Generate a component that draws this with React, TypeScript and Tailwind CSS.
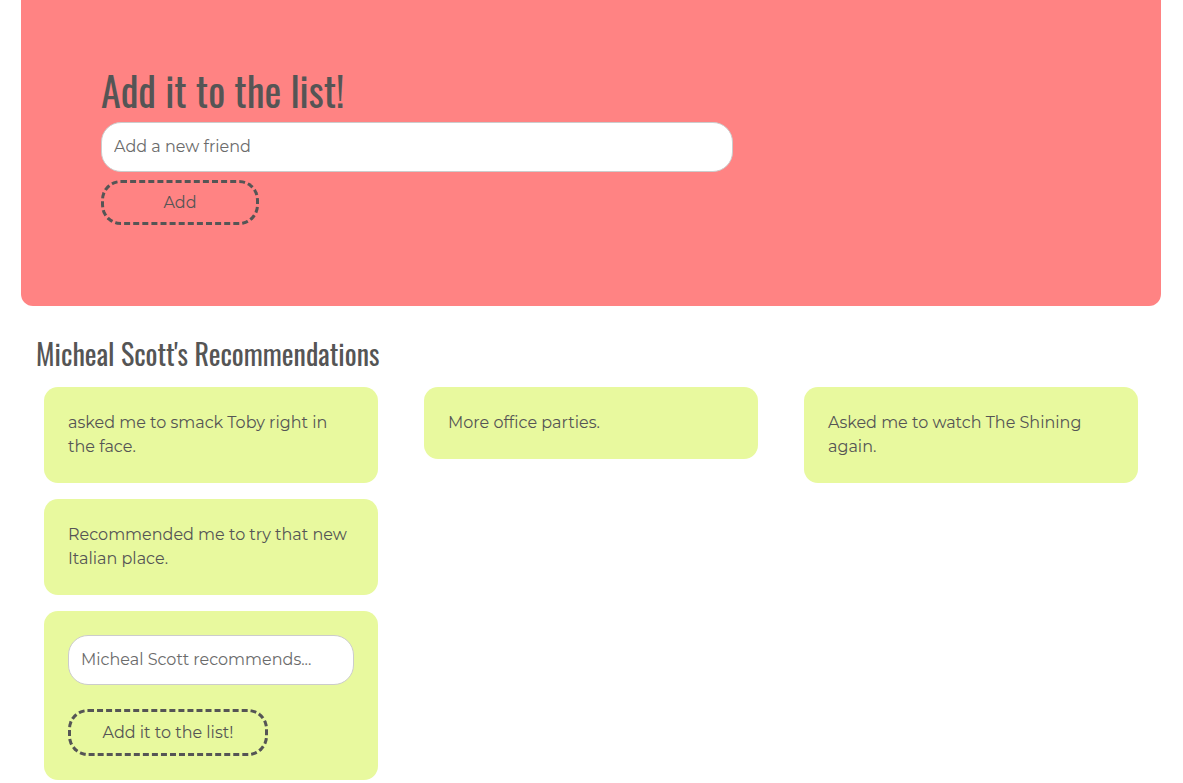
import React from "react";

const recs = [
  "asked me to smack Toby right in the face.",
  "More office parties.",
  "Asked me to watch The Shining again.",
  "Recommended me to try that new Italian place.",
];

export default function App() {
  return (
    <div className="min-h-[783px] bg-white font-[Montserrat,'DejaVu_Sans',sans-serif] text-[#555555]">
      <div className="mx-[21px] w-[1140px] rounded-b-[12px] bg-[#ff8383] px-[80px] pt-[64px] pb-[81px]">
        <h1 className="font-[Oswald,'Liberation_Sans_Narrow',sans-serif] text-[40px] leading-[52px] font-normal text-[#555555]">
          Add it to the list!
        </h1>
        <input
          className="mt-[6px] block h-[50px] w-[632px] rounded-[20px] border border-[#cccccc] bg-white px-[12px] pb-[2px] font-[Montserrat,'DejaVu_Sans',sans-serif] text-[16px] text-[#555555] outline-none placeholder:text-[#6b6b6b]"
          placeholder="Add a new friend"
        />
        <button className="mt-[8px] block h-[45px] w-[158px] rounded-[20px] border-[3px] border-dashed border-[#555555] bg-transparent font-[Montserrat,'DejaVu_Sans',sans-serif] text-[16px] text-[#555555]">
          Add
        </button>
      </div>

      <h2 className="ml-[36px] mt-[30px] font-[Oswald,'Liberation_Sans_Narrow',sans-serif] text-[28px] leading-[36px] font-normal text-[#555555]">
        Micheal Scott's Recommendations
      </h2>

      <div className="ml-[44px] mt-[15px] grid w-[1094px] grid-cols-3 items-start gap-x-[46px] gap-y-[16px]">
        {recs.map((r) => (
          <div key={r} className="rounded-[14px] bg-[#e8f99e] p-[24px] text-[16px] leading-[24px] text-[#555555]">
            {r}
          </div>
        ))}
        <div className="col-start-1 rounded-[14px] bg-[#e8f99e] p-[24px]">
          <input
            className="block h-[50px] w-full rounded-[20px] border border-[#cccccc] bg-white px-[12px] pb-[2px] font-[Montserrat,'DejaVu_Sans',sans-serif] text-[16px] text-[#555555] outline-none placeholder:text-[#6b6b6b]"
            placeholder="Micheal Scott recommends..."
          />
          <button className="mt-[24px] block h-[47px] w-[200px] rounded-[20px] border-[3px] border-dashed border-[#555555] bg-transparent font-[Montserrat,'DejaVu_Sans',sans-serif] text-[16px] text-[#555555]">
            Add it to the list!
          </button>
        </div>
      </div>
    </div>
  );
}
